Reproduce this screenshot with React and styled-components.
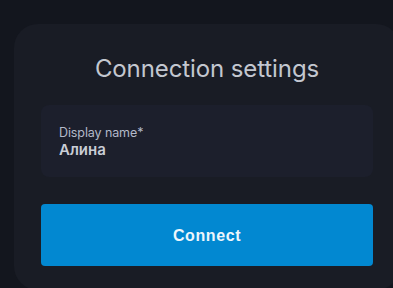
import React, { useState } from "react";
import styled, { createGlobalStyle } from "styled-components";

const GlobalStyle = createGlobalStyle`
  html, body {
    margin: 0;
    padding: 0;
    background: #13161e;
    overflow: hidden;
  }
  body {
    font-family: Inter, "Noto Sans", sans-serif;
  }
`;

const Page = styled.div`
  width: 100vw;
  height: 100vh;
  padding: 24px 0 0 14px;
  box-sizing: border-box;
  background: #13161e;
`;

const Card = styled.div`
  width: 386px;
  height: 266px;
  box-sizing: border-box;
  padding: 30px 27px 0;
  background: #191c25;
  border-radius: 24px;
  display: flex;
  flex-direction: column;
`;

const Title = styled.h1`
  margin: 0;
  text-align: center;
  font-size: 24px;
  font-weight: 400;
  color: #c3c7d0;
  line-height: 30px;
  letter-spacing: -0.1px;
`;

const Field = styled.label`
  margin-top: 21px;
  height: 72px;
  box-sizing: border-box;
  padding: 20px 18px 0;
  background: #1c1f2c;
  border-radius: 8px;
  display: flex;
  flex-direction: column;
  gap: 1px;
`;

const Label = styled.span`
  font-size: 12.5px;
  line-height: 15px;
  letter-spacing: -0.1px;
  color: #b3b9c9;
`;

const Input = styled.input`
  margin: 0;
  padding: 0;
  border: none;
  outline: none;
  background: transparent;
  font-family: inherit;
  font-size: 15px;
  font-weight: 600;
  line-height: 18px;
  color: #c9cdd6;
`;

const Button = styled.button`
  margin-top: 27px;
  height: 62px;
  padding: 2px 0 0;
  border: none;
  border-radius: 4px;
  background: #0288d1;
  color: #eef6fc;
  font-family: "Liberation Sans", Arial, sans-serif;
  font-size: 16px;
  font-weight: 700;
  letter-spacing: 0.6px;
  cursor: pointer;
`;

const App = () => {
  const [name, setName] = useState("Алина");
  return (
    <Page>
      <GlobalStyle />
      <Card>
        <Title>Connection settings</Title>
        <Field>
          <Label>Display name*</Label>
          <Input value={name} onChange={(e) => setName(e.target.value)} />
        </Field>
        <Button type="button">Connect</Button>
      </Card>
    </Page>
  );
};

export default App;
